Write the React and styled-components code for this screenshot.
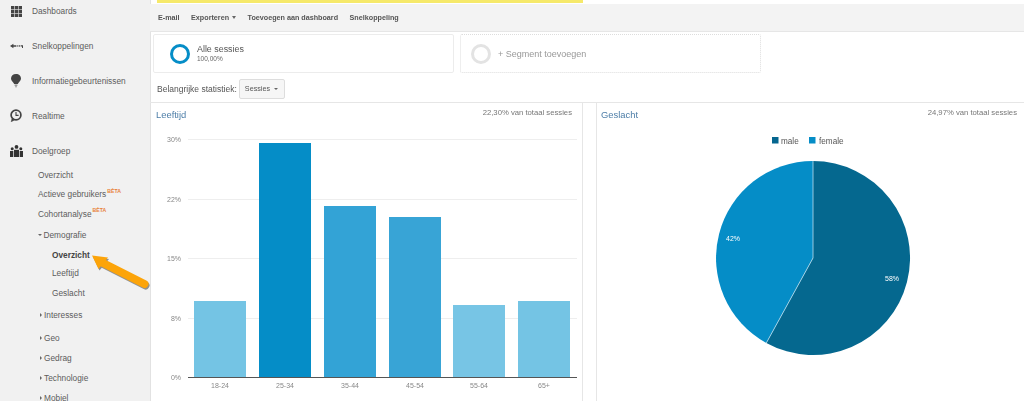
import React from "react";
import styled, { createGlobalStyle } from "styled-components";

const GlobalStyle = createGlobalStyle`
  html, body {
    margin: 0;
    height: 401px;
    overflow: hidden;
    background: #fff;
    font-family: "Liberation Sans", Arial, sans-serif;
    color: #555;
  }
`;

const Page = styled.div`
  position: relative;
  display: flex;
  width: 1024px;
  height: 401px;
  overflow: hidden;
  filter: blur(0.3px);
`;

const Sidebar = styled.nav`
  flex: 0 0 151px;
  height: 401px;
  margin-right: -1px;
  box-sizing: border-box;
  background: #f1f1f1;
  border-right: 1px solid #e2e2e2;
  overflow: hidden;
`;

const TopList = styled.div`
  margin-top: -7px;
`;

const TopItem = styled.div`
  display: flex;
  align-items: center;
  height: 35px;
  font-size: 8.3px;
  color: #5c5c5c;
`;

const IconBox = styled.span`
  display: flex;
  justify-content: center;
  width: 32px;
`;

const SubList = styled.div`
  margin-top: -3px;
`;

const SubItem = styled.div`
  display: flex;
  align-items: center;
  height: ${(p) => p.$h || 19.5}px;
  padding-left: ${(p) => p.$indent || 38}px;
  font-size: 8.3px;
  font-weight: ${(p) => (p.$bold ? 700 : 400)};
  color: ${(p) => (p.$bold ? "#444" : "#5c5c5c")};
`;

const Beta = styled.span`
  align-self: flex-start;
  margin: 3px 0 0 1px;
  font-size: 5.2px;
  font-weight: 700;
  color: #e8813a;
`;

const Caret = styled.span`
  width: 0;
  height: 0;
  border-style: solid;
  ${(p) =>
    p.$open
      ? "margin: 0 1.5px 0 0; border-width: 2.5px 2.5px 0 2.5px; border-color: #666 transparent transparent transparent;"
      : "margin: 0 2.5px 0 1.5px; border-width: 2.5px 0 2.5px 2.5px; border-color: transparent transparent transparent #666;"}
`;

const Main = styled.main`
  flex: 1;
  display: flex;
  flex-direction: column;
  min-width: 0;
`;

const YellowBar = styled.div`
  width: 426px;
  height: 3px;
  margin-left: 7px;
  background: #f6e96a;
`;

const Toolbar = styled.div`
  display: flex;
  align-items: center;
  gap: 11.5px;
  height: 27px;
  margin-top: 1px;
  padding-left: 8px;
  background: #f3f3f3;
  border-bottom: 1px solid #e6e6e6;
  font-size: 7.2px;
  font-weight: 700;
  color: #555;
`;

const ToolCaret = styled.span`
  display: inline-block;
  margin-left: 3px;
  vertical-align: 1px;
  border-style: solid;
  border-width: 3px 2.5px 0 2.5px;
  border-color: #666 transparent transparent transparent;
`;

const Segments = styled.div`
  display: flex;
  gap: 6px;
  margin: 2px 0 0 3px;
`;

const SegmentCard = styled.div`
  display: flex;
  align-items: center;
  gap: 7px;
  box-sizing: border-box;
  width: ${(p) => p.$w}px;
  height: 39px;
  padding-left: ${(p) => p.$pad}px;
  border: 1px ${(p) => (p.$empty ? "dotted #ddd" : "solid #ececec")};
  border-radius: 2px;
`;

const Ring = styled.div`
  width: 20px;
  height: 20px;
  box-sizing: border-box;
  border-radius: 50%;
  border: 3px solid ${(p) => p.$color};
`;

const SegmentName = styled.div`
  font-size: 8.9px;
  line-height: 10px;
  color: #555;
`;

const SegmentValue = styled.div`
  font-size: 6.5px;
  line-height: 9px;
  color: #666;
`;

const SegmentAdd = styled.div`
  font-size: 9px;
  color: #999;
`;

const StatRow = styled.div`
  display: flex;
  align-items: center;
  gap: 2px;
  box-sizing: border-box;
  height: 29px;
  padding: 2px 0 0 7px;
  font-size: 8.5px;
  color: #555;
`;

const Select = styled.div`
  display: flex;
  align-items: center;
  justify-content: space-between;
  box-sizing: border-box;
  width: 46px;
  height: 20px;
  padding: 0 4px 0 5px;
  background: #f6f6f6;
  border: 1px solid #ddd;
  border-radius: 2px;
  font-size: 7.2px;
`;

const Panels = styled.div`
  display: flex;
  flex: 1;
  gap: 13px;
  border-top: 1px solid #e6e6e6;
`;

const Panel = styled.section`
  box-sizing: border-box;
  width: ${(p) => p.$w}px;
  border-right: ${(p) => (p.$divider ? "1px solid #e6e6e6" : "none")};
  border-left: ${(p) => (p.$left ? "1px solid #e6e6e6" : "none")};
`;

const PanelHead = styled.div`
  display: flex;
  align-items: center;
  justify-content: space-between;
  height: 23px;
  padding: 0 ${(p) => p.$right}px 0 ${(p) => p.$pad}px;
`;

const PanelTitle = styled.div`
  margin-top: -1px;
  font-size: 9.4px;
  color: #4d7ea8;
`;

const PanelNote = styled.div`
  margin-top: -4px;
  font-size: 7.7px;
  color: #777;
`;

const Chart = styled.svg`
  display: block;
  text {
    font-family: "Liberation Sans", Arial, sans-serif;
  }
`;

const ArrowLayer = styled.svg`
  position: absolute;
  left: 85px;
  top: 245px;
`;

const gridIcon = (
  <svg width="11" height="11" viewBox="0 0 12 12" fill="#444" style={{ marginTop: 1 }}>
    {[0, 4.2, 8.4].map((x) =>
      [0, 4.2, 8.4].map((y) => <rect key={`${x}-${y}`} x={x} y={y} width="3.6" height="3.6" />)
    )}
  </svg>
);

const shortcutIcon = (
  <svg width="13" height="12" viewBox="0 0 13 12" fill="#444">
    <path d="M0 6 L3.4 3.8 V5.2 H6.4 V6.8 H3.4 V8.2 Z" />
    <rect x="7.2" y="5.3" width="1.2" height="1.3" />
    <rect x="9" y="5.3" width="1.2" height="1.3" />
    <path d="M10.8 5.2 H13 V8 H12 V6.6 H10.8 Z" />
  </svg>
);

const bulbIcon = (
  <svg width="10" height="14" viewBox="0 0 10 14" fill="#444">
    <path d="M5 0 C8 0 10 2 10 4.6 C10 7 8 8 6.8 10 H3.2 C2 8 0 7 0 4.6 C0 2 2 0 5 0 Z" />
    <rect x="3.6" y="10.6" width="2.8" height="1.1" fill="#777" />
    <rect x="4.1" y="12.2" width="1.8" height="1.1" fill="#999" />
  </svg>
);

const clockIcon = (
  <svg width="12" height="13" viewBox="0 0 12 13" fill="none" stroke="#444">
    <circle cx="6" cy="6" r="4.9" strokeWidth="1.7" />
    <path d="M6 3 V6.4 H8.6" strokeWidth="1.1" />
    <path d="M2 9.5 L1.2 12.8 L4.5 11" fill="#444" strokeWidth="0.5" />
  </svg>
);

const peopleIcon = (
  <svg width="13" height="12" viewBox="0 0 13 12" fill="#333">
    <circle cx="6.5" cy="1.9" r="1.9" />
    <circle cx="2.2" cy="3.8" r="1.5" />
    <circle cx="10.8" cy="3.8" r="1.5" />
    <path d="M4 4.8 H9 V12 H4 Z" />
    <path d="M0 6 H3.3 V12 H0 Z" />
    <path d="M9.7 6 H13 V12 H9.7 Z" />
  </svg>
);

const topItems = [
  ["Dashboards", gridIcon],
  ["Snelkoppelingen", shortcutIcon],
  ["Informatiegebeurtenissen", bulbIcon],
  ["Realtime", clockIcon],
  ["Doelgroep", peopleIcon],
];

const bars = [
  { label: "18-24", x: 194, top: 301, color: "#74c4e4" },
  { label: "25-34", x: 259, top: 143, color: "#058dc7" },
  { label: "35-44", x: 324, top: 206, color: "#33a3d6" },
  { label: "45-54", x: 389, top: 217, color: "#38a4d6" },
  { label: "55-64", x: 453, top: 305, color: "#77c5e5" },
  { label: "65+", x: 518, top: 301, color: "#74c4e4" },
];

const grid = [
  ["30%", 139],
  ["22%", 199],
  ["15%", 258],
  ["8%", 318],
];

// chart coords are page coords, shifted by the panel origin
const OX = 150;
const OY = 126;

function AgeChart() {
  return (
    <Chart width="432" height="275" viewBox={`${OX} ${OY} 432 275`}>
      {grid.map(([label, y]) => (
        <g key={label}>
          <line x1="188" x2="577" y1={y + 0.5} y2={y + 0.5} stroke="#eeeeee" />
          <text x="181" y={y + 2.5} textAnchor="end" fontSize="7" fill="#888">
            {label}
          </text>
        </g>
      ))}
      {bars.map((b) => (
        <g key={b.label}>
          <rect x={b.x} y={b.top} width="52" height={377 - b.top} fill={b.color} />
          <text x={b.x + 26} y="388" textAnchor="middle" fontSize="7" fill="#888">
            {b.label}
          </text>
        </g>
      ))}
      <line x1="188" x2="577" y1="377.5" y2="377.5" stroke="#555" />
      <text x="181" y="380" textAnchor="end" fontSize="7" fill="#888">
        0%
      </text>
    </Chart>
  );
}

function GenderChart() {
  return (
    <Chart width="428" height="275" viewBox={`597 ${OY} 428 275`}>
      <rect x="772" y="137" width="6.5" height="6.5" fill="#05668f" />
      <text x="781" y="143.5" fontSize="8.2" fill="#555">
        male
      </text>
      <rect x="809" y="137" width="6.5" height="6.5" fill="#058dc7" />
      <text x="819" y="143.5" fontSize="8.2" fill="#555">
        female
      </text>
      <path d="M813 258 L813 161 A97 97 0 1 1 766.3 343 Z" fill="#05688f" />
      <path d="M813 258 L766.3 343 A97 97 0 0 1 813 161 Z" fill="#058dc7" />
      <path d="M766.3 343 L813 258 L813 161" fill="none" stroke="#b9dcec" strokeWidth="0.8" />
      <text x="892" y="280.5" textAnchor="middle" fontSize="7" fill="#fff">
        58%
      </text>
      <text x="733" y="240.5" textAnchor="middle" fontSize="7" fill="#fff">
        42%
      </text>
    </Chart>
  );
}

export default function App() {
  return (
    <Page>
      <GlobalStyle />
      <Sidebar>
        <TopList>
          {topItems.map(([label, icon]) => (
            <TopItem key={label}>
              <IconBox>{icon}</IconBox>
              {label}
            </TopItem>
          ))}
        </TopList>
        <SubList>
          <SubItem>Overzicht</SubItem>
          <SubItem>
            Actieve gebruikers<Beta>BÈTA</Beta>
          </SubItem>
          <SubItem>
            Cohortanalyse<Beta>BÈTA</Beta>
          </SubItem>
          <SubItem $h={23}>
            <Caret $open />
            Demografie
          </SubItem>
          <SubItem $h={17} $indent={52} $bold>
            Overzicht
          </SubItem>
          <SubItem $h={19.5} $indent={52}>
            Leeftijd
          </SubItem>
          <SubItem $h={19} $indent={52}>
            Geslacht
          </SubItem>
          <SubItem $h={25.5}>
            <Caret />
            Interesses
          </SubItem>
          <SubItem $h={20}>
            <Caret />
            Geo
          </SubItem>
          <SubItem $h={20}>
            <Caret />
            Gedrag
          </SubItem>
          <SubItem $h={20}>
            <Caret />
            Technologie
          </SubItem>
          <SubItem $h={20}>
            <Caret />
            Mobiel
          </SubItem>
        </SubList>
      </Sidebar>
      <Main>
        <YellowBar />
        <Toolbar>
          <span>E-mail</span>
          <span>
            Exporteren
            <ToolCaret />
          </span>
          <span>Toevoegen aan dashboard</span>
          <span>Snelkoppeling</span>
        </Toolbar>
        <Segments>
          <SegmentCard $w={301} $pad={16}>
            <Ring $color="#058dc7" />
            <div>
              <SegmentName>Alle sessies</SegmentName>
              <SegmentValue>100,00%</SegmentValue>
            </div>
          </SegmentCard>
          <SegmentCard $w={301} $pad={10} $empty>
            <Ring $color="#e3e3e3" />
            <SegmentAdd>+ Segment toevoegen</SegmentAdd>
          </SegmentCard>
        </Segments>
        <StatRow>
          Belangrijke statistiek:
          <Select>
            Sessies
            <Caret $open />
          </Select>
        </StatRow>
        <Panels>
          <Panel $w={433} $divider>
            <PanelHead $pad={6} $right={10}>
              <PanelTitle>Leeftijd</PanelTitle>
              <PanelNote>22,30% van totaal sessies</PanelNote>
            </PanelHead>
            <AgeChart />
          </Panel>
          <Panel $w={428} $left>
            <PanelHead $pad={4} $right={7}>
              <PanelTitle>Geslacht</PanelTitle>
              <PanelNote>24,97% van totaal sessies</PanelNote>
            </PanelHead>
            <GenderChart />
          </Panel>
        </Panels>
      </Main>
      <ArrowLayer width="70" height="50" viewBox="85 245 70 50">
        <g transform="translate(1 1.5)" opacity="0.5">
          <path d="M92 255.5 L108 257.5 L98.5 269 Z" fill="#333" />
          <path d="M101 262 L144.5 284" stroke="#333" strokeWidth="8" strokeLinecap="round" />
        </g>
        <path d="M92 255.5 L108 257.5 L98.5 269 Z" fill="#fca40a" />
        <path d="M101 262 L144.5 284" stroke="#fca40a" strokeWidth="8" strokeLinecap="round" />
      </ArrowLayer>
    </Page>
  );
}
